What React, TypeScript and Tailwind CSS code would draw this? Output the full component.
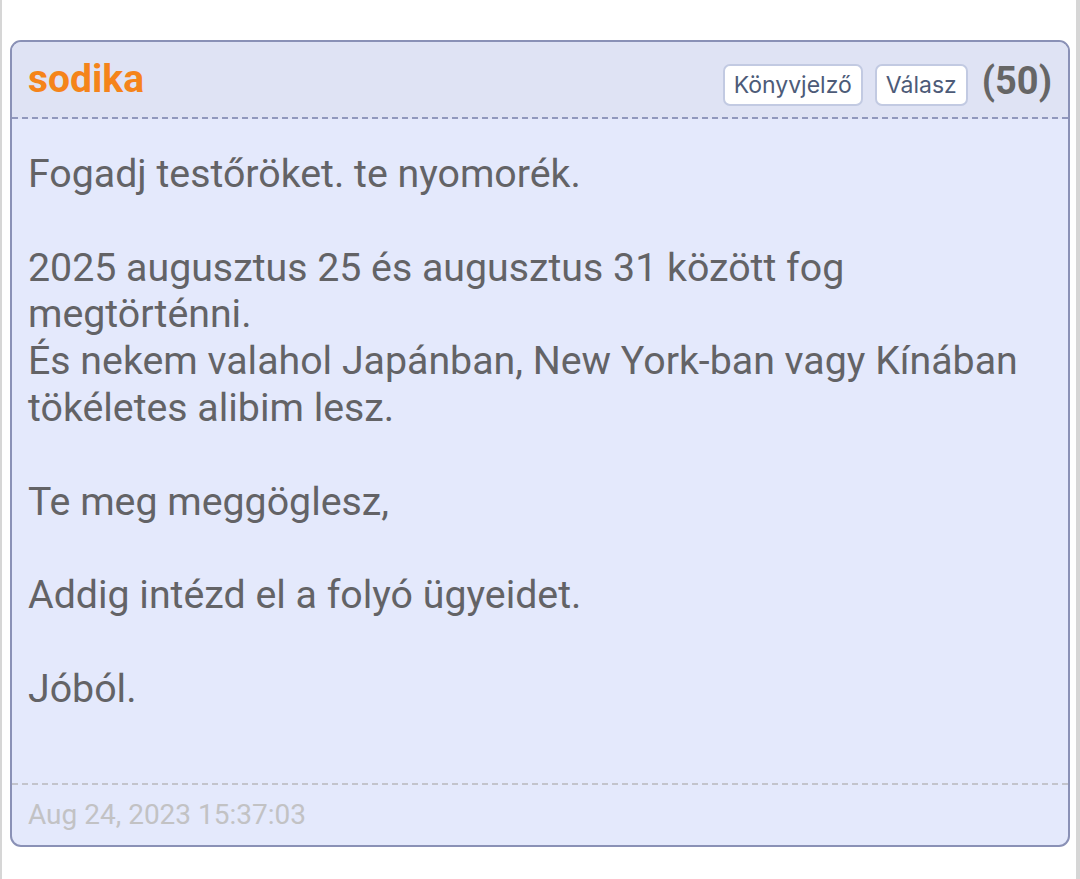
import React from 'react';

const lines = [
  'Fogadj testőröket. te nyomorék.',
  '',
  '2025 augusztus 25 és augusztus 31 között fog megtörténni.',
  'És nekem valahol Japánban, New York-ban vagy Kínában tökéletes alibim lesz.',
  '',
  'Te meg meggöglesz,',
  '',
  'Addig intézd el a folyó ügyeidet.',
  '',
  'Jóból.',
];

function PostButton({ label }: { label: string }) {
  return (
    <button className="h-[42px] px-[9px] rounded-[7px] border-2 border-[#c2cae2] bg-white text-[23px] text-[#4d5b78] font-['Inter',sans-serif] leading-none">
      {label}
    </button>
  );
}

export default function App() {
  return (
    <div className="min-h-[879px] bg-white border-l-2 border-r-4 border-[#d6d6d6] pl-2 pr-[6px] pt-10 font-['Roboto',sans-serif]">
      <div className="rounded-[11px] border-2 border-[#8a91b6] bg-[#e4e9fc] overflow-hidden">
        <div className="flex items-center justify-between h-[77px] pl-4 pr-4 bg-[#dfe3f4] border-b-2 border-dashed border-[#9198bd]">
          <span className="text-[39px] font-bold text-[#f5841a]">sodika</span>
          <div className="flex items-center gap-[12px] pt-[11px]">
            <PostButton label="Könyvjelző" />
            <PostButton label="Válasz" />
            <span className="text-[38px] font-bold text-[#666666] ml-[2px] -mt-[8px]">(50)</span>
          </div>
        </div>
        <div className="pl-4 pr-[34px] pt-[32px] pb-[70px] text-[39.3px] leading-[46.8px] text-[#636366]">
          {lines.map((line, i) => (
            <p key={i} className="min-h-[46.8px]">{line}</p>
          ))}
        </div>
        <div className="border-t-2 border-dashed border-[#c3c4cc] pl-4 h-[62px] flex items-center text-[28px] text-[#c2c2c4]">
          Aug 24, 2023 15:37:03
        </div>
      </div>
    </div>
  );
}
